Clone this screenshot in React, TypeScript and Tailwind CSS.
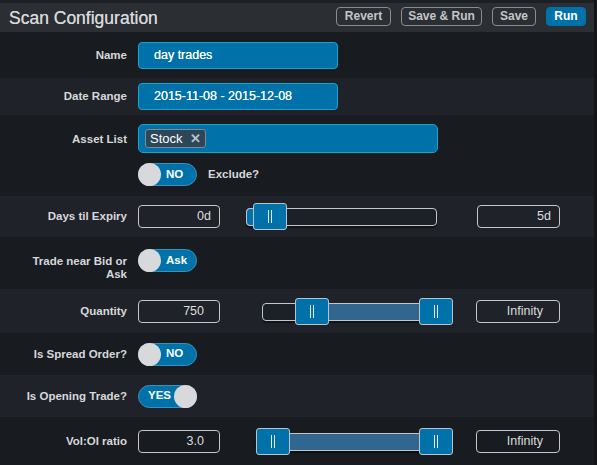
import React from 'react'

const font = "font-['Liberation_Sans',Arial,sans-serif]"

function HeaderButton({ label, width, primary = false }: { label: string; width: string; primary?: boolean }) {
  return (
    <button
      className={`${width} h-[19px] flex items-center justify-center rounded-[4px] text-[12px] font-bold leading-none ${
        primary
          ? 'bg-[#0172a9] text-white border border-[#0172a9]'
          : 'border border-[#8a8d90] text-[#c4c6c8]'
      }`}
    >
      {label}
    </button>
  )
}

function Label({ children, className = '' }: { children: React.ReactNode; className?: string }) {
  return (
    <div className={`w-[127px] shrink-0 text-right text-[11.5px] font-bold leading-[12.5px] text-[#d6d8da] ${className}`}>
      {children}
    </div>
  )
}

function BlueInput({ value, width }: { value: string; width: string }) {
  return (
    <div
      className={`${width} h-[27px] flex items-center rounded-[4px] border border-[#1aa3c6] bg-[#0172a9] pl-[15px] text-[12.5px] text-white [text-shadow:0_0_0.5px_#ffffff]`}
    >
      {value}
    </div>
  )
}

function Toggle({ on, text }: { on: boolean; text: string }) {
  return (
    <div className="relative w-[59px] h-[23px] rounded-full bg-[#0172a9] border border-[#3f8fb8]">
      <div
        className={`absolute top-[-1px] h-[23px] w-[23px] rounded-full bg-[#d8d9da] ${
          on ? 'right-[-1px]' : 'left-[-1px]'
        }`}
      />
      <div
        className={`absolute top-0 h-full flex items-center text-[11.5px] font-bold text-white ${
          on ? 'left-[9px]' : 'left-[27px]'
        }`}
      >
        {text}
      </div>
    </div>
  )
}

function ValueBox({ value, pr = 'pr-[15px]', width = 'w-[82px]' }: { value: string; pr?: string; width?: string }) {
  return (
    <div
      className={`${width} h-[23px] shrink-0 flex items-center justify-end rounded-[4px] border border-[#c4c7ca] ${pr} text-[12.5px] text-[#dcdddf]`}
    >
      {value}
    </div>
  )
}

function Handle({ left }: { left: number }) {
  return (
    <div
      className="absolute top-0 h-[27px] w-[34px] rounded-[3px] border border-[#b8c4cc] bg-[#0172a9] flex items-center justify-center gap-[2px]"
      style={{ left }}
    >
      <div className="h-[13px] w-px bg-[#e6eef3]" />
      <div className="h-[13px] w-px bg-[#e6eef3]" />
    </div>
  )
}

function RangeSlider({ width, lo, hi }: { width: number; lo: number; hi?: number }) {
  return (
    <div className="relative h-[27px] shrink-0" style={{ width }}>
      <div className="absolute left-0 right-0 top-[5px] h-[18px] rounded-[4px] border border-[#c3c6c9] bg-[#1c2127] shadow-[0_2px_1px_rgba(0,0,0,0.45)]" />
      {hi === undefined ? (
        <div className="absolute left-0 top-[5px] h-[18px] rounded-l-[4px] border border-[#c3c6c9] bg-[#0172a9]" style={{ width: lo + 4 }} />
      ) : (
        <div
          className="absolute top-[6px] h-[16px] bg-[#33668f]"
          style={{ left: lo + 30, width: hi - lo - 30 }}
        />
      )}
      <Handle left={lo} />
      {hi !== undefined && <Handle left={hi} />}
    </div>
  )
}

export default function App() {
  return (
    <div className={`w-[597px] h-[465px] flex overflow-hidden bg-[#181b20] ${font}`}>
      <div className="w-[594px] flex flex-col">
        <div className="h-[3px] bg-[#1c1f23]" />
        {/* Header */}
        <div className="h-[29px] flex items-center justify-between bg-[#2b2f34] pl-[9px] pr-[8px]">
          <div className="text-[17.5px] leading-none text-[#d6d8da] pt-[3px] [text-shadow:0_0_0.4px_#d6d8da]">Scan Configuration</div>
          <div className="flex items-center gap-[10px] pb-[3px]">
            <HeaderButton label="Revert" width="w-[55px]" />
            <HeaderButton label="Save & Run" width="w-[81px]" />
            <HeaderButton label="Save" width="w-[44px]" />
            <HeaderButton label="Run" width="w-[40px]" primary />
          </div>
        </div>

        {/* Name */}
        <div className="h-[46px] flex items-center gap-[11px] bg-[#181b20]">
          <Label>Name</Label>
          <BlueInput value="day trades" width="w-[200px]" />
        </div>

        {/* Date Range */}
        <div className="h-[37px] flex items-center gap-[11px] bg-[#1f2329]">
          <Label>Date Range</Label>
          <BlueInput value="2015-11-08 - 2015-12-08" width="w-[200px]" />
        </div>

        {/* Asset List */}
        <div className="h-[81px] flex gap-[11px] bg-[#181b20] pt-[9px]">
          <Label className="pt-[9px]">Asset List</Label>
          <div className="flex flex-col gap-[10px]">
            <div className="w-[300px] h-[29px] flex items-center rounded-[5px] border border-[#1aa3c6] bg-[#0172a9] pl-[6px]">
              <div className="h-[19px] flex items-center gap-[7px] rounded-[3px] border border-[#7d8b96] bg-[#2d4658] px-[4px] text-[13px] text-white">
                <span>Stock</span>
                <span className="text-[13px] font-bold text-[#b9c1c8]">✕</span>
              </div>
            </div>
            <div className="flex items-center gap-[11px]">
              <Toggle on={false} text="NO" />
              <span className="text-[11.5px] font-bold text-[#d6d8da]">Exclude?</span>
            </div>
          </div>
        </div>

        {/* Days til Expiry */}
        <div className="h-[41px] flex items-center gap-[11px] bg-[#1f2329]">
          <Label>Days til Expiry</Label>
          <div className="flex items-center">
            <ValueBox value="0d" pr="pr-[8px]" />
            <div className="ml-[26px]">
              <RangeSlider width={191} lo={7} />
            </div>
            <div className="ml-[40px]">
              <ValueBox value="5d" pr="pr-[8px]" width="w-[83px]" />
            </div>
          </div>
        </div>

        {/* Trade near Bid or Ask */}
        <div className="h-[52px] flex gap-[11px] bg-[#181b20] pt-[12px]">
          <Label className="pt-[6px]">
            Trade near Bid or
            <br />
            Ask
          </Label>
          <Toggle on={false} text="Ask" />
        </div>

        {/* Quantity */}
        <div className="h-[44px] flex items-center gap-[11px] bg-[#1f2329]">
          <Label>Quantity</Label>
          <div className="flex items-center">
            <ValueBox value="750" />
            <div className="ml-[42px]">
              <RangeSlider width={191} lo={33} hi={157} />
            </div>
            <div className="ml-[23px]">
              <ValueBox value="Infinity" pr="pr-[16px]" width="w-[84px]" />
            </div>
          </div>
        </div>

        {/* Is Spread Order */}
        <div className="h-[42px] flex items-center gap-[11px] bg-[#181b20]">
          <Label>Is Spread Order?</Label>
          <Toggle on={false} text="NO" />
        </div>

        {/* Is Opening Trade */}
        <div className="h-[42px] flex items-center gap-[11px] bg-[#1f2329]">
          <Label>Is Opening Trade?</Label>
          <Toggle on={true} text="YES" />
        </div>

        {/* Vol:OI ratio */}
        <div className="h-[48px] flex items-center gap-[11px] bg-[#181b20]">
          <Label>Vol:OI ratio</Label>
          <div className="flex items-center">
            <ValueBox value="3.0" />
            <div className="ml-[36px]">
              <RangeSlider width={197} lo={0} hi={163} />
            </div>
            <div className="ml-[23px]">
              <ValueBox value="Infinity" pr="pr-[16px]" width="w-[84px]" />
            </div>
          </div>
        </div>
      </div>
      <div className="w-[3px] bg-[#121417]" />
    </div>
  )
}
